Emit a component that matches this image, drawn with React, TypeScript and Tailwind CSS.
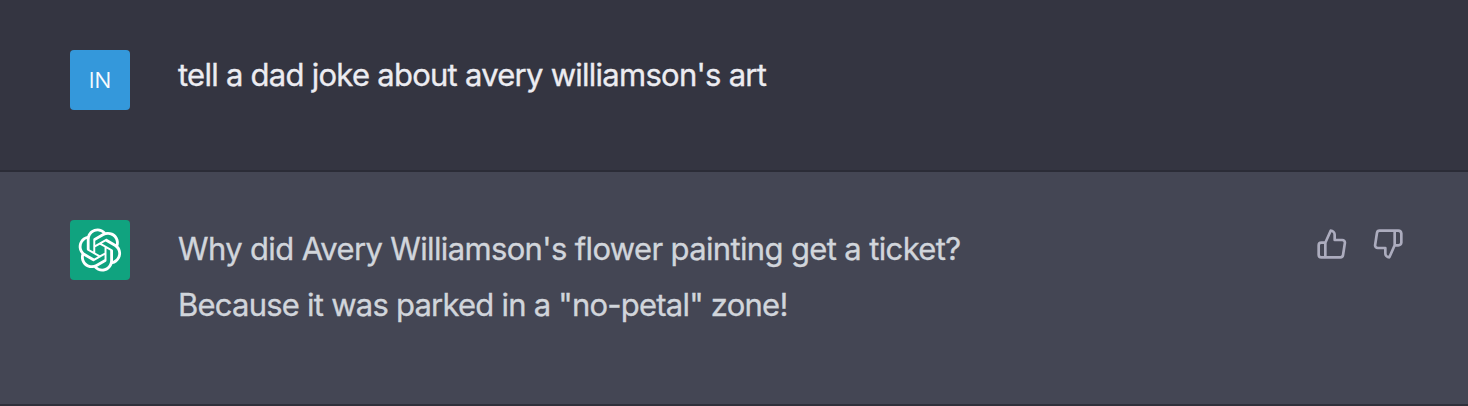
import React from "react";
import { FiThumbsDown, FiThumbsUp } from "react-icons/fi";

function OpenAiLogo() {
  return (
    <svg viewBox="0 0 41 41" fill="none" className="-ml-px w-[44px] h-[44px]">
      <path
        d="M37.5324 16.8707C37.9808 15.5241 38.1363 14.0974 37.9886 12.6859C37.8409 11.2744 37.3934 9.91076 36.676 8.68622C35.6126 6.83404 33.9882 5.3676 32.0373 4.4985C30.0864 3.62941 27.9098 3.40259 25.8215 3.85078C24.8796 2.7893 23.7219 1.94125 22.4257 1.36341C21.1295 0.785575 19.7249 0.491269 18.3058 0.500197C16.1708 0.495044 14.0893 1.16803 12.3614 2.42214C10.6335 3.67624 9.34853 5.44666 8.6917 7.47815C7.30085 7.76286 5.98686 8.3414 4.8377 9.17505C3.68854 10.0087 2.73073 11.0782 2.02839 12.312C0.956464 14.1591 0.498905 16.2988 0.721698 18.4228C0.944492 20.5467 1.83612 22.5449 3.268 24.1293C2.81966 25.4759 2.66413 26.9026 2.81182 28.3141C2.95951 29.7256 3.40701 31.0892 4.12437 32.3138C5.18791 34.1659 6.8123 35.6322 8.76321 36.5013C10.7141 37.3704 12.8907 37.5973 14.9789 37.1492C15.9208 38.2107 17.0786 39.0587 18.3747 39.6366C19.6709 40.2144 21.0755 40.5087 22.4946 40.4998C24.6307 40.5054 26.7133 39.8321 28.4418 38.5772C30.1704 37.3223 31.4556 35.5506 32.1119 33.5179C33.5027 33.2332 34.8167 32.6547 35.9659 31.821C37.115 30.9874 38.0728 29.9178 38.7752 28.684C39.8458 26.8371 40.3023 24.6979 40.0789 22.5748C39.8556 20.4517 38.9639 18.4544 37.5324 16.8707ZM22.4978 37.8849C20.7443 37.8874 19.0459 37.2733 17.6994 36.1501C17.7601 36.117 17.8666 36.0586 17.936 36.0161L25.9004 31.4156C26.1003 31.3019 26.2663 31.137 26.3813 30.9378C26.4964 30.7386 26.5563 30.5124 26.5549 30.2825V19.0542L29.9213 20.998C29.9389 21.0068 29.9541 21.0198 29.9656 21.0359C29.977 21.052 29.9842 21.0707 29.9867 21.0902V30.3889C29.9842 32.375 29.1946 34.2791 27.7909 35.6841C26.3872 37.0892 24.4838 37.8806 22.4978 37.8849ZM6.39227 31.0064C5.51397 29.4888 5.19742 27.7107 5.49804 25.9832C5.55718 26.0187 5.66048 26.0818 5.73461 26.1244L13.699 30.7248C13.8975 30.8408 14.1233 30.902 14.3532 30.902C14.583 30.902 14.8088 30.8408 15.0073 30.7248L24.731 25.1103V28.9979C24.7321 29.0177 24.7283 29.0376 24.7199 29.0556C24.7115 29.0736 24.6988 29.0893 24.6829 29.1012L16.6317 33.7497C14.9096 34.7416 12.8643 35.0097 10.9447 34.4954C9.02506 33.9811 7.38785 32.7263 6.39227 31.0064ZM4.29707 13.6194C5.17156 12.0998 6.55279 10.9364 8.19885 10.3327C8.19885 10.4013 8.19491 10.5228 8.19491 10.6071V19.808C8.19351 20.0378 8.25334 20.2638 8.36823 20.4629C8.48312 20.6619 8.64893 20.8267 8.84863 20.9404L18.5723 26.5542L15.206 28.4979C15.1894 28.5089 15.1703 28.5155 15.1505 28.5173C15.1307 28.5191 15.1107 28.516 15.0924 28.5082L7.04046 23.8557C5.32135 22.8601 4.06716 21.2235 3.55289 19.3046C3.03862 17.3858 3.30624 15.3413 4.29707 13.6194ZM31.955 20.0556L22.2312 14.4411L25.5976 12.4981C25.6142 12.4872 25.6333 12.4805 25.6531 12.4787C25.6729 12.4769 25.6928 12.4801 25.7111 12.4879L33.7631 17.1364C34.9967 17.849 36.0017 18.8982 36.6606 20.1613C37.3194 21.4244 37.6047 22.849 37.4832 24.2684C37.3617 25.6878 36.8382 27.0432 35.9743 28.1759C35.1103 29.3086 33.9415 30.1717 32.6047 30.6641C32.6047 30.5947 32.6047 30.4733 32.6047 30.3889V21.188C32.6066 20.9586 32.5474 20.7328 32.4332 20.5338C32.319 20.3348 32.154 20.1698 31.955 20.0556ZM35.3055 15.0128C35.2464 14.9765 35.1431 14.9142 35.069 14.8717L27.1045 10.2712C26.906 10.1554 26.6803 10.0943 26.4504 10.0943C26.2206 10.0943 25.9948 10.1554 25.7963 10.2712L16.0726 15.8858V11.9982C16.0715 11.9783 16.0753 11.9585 16.0837 11.9405C16.0921 11.9225 16.1048 11.9068 16.1207 11.8949L24.1719 7.25025C25.4053 6.53903 26.8158 6.19376 28.2383 6.25482C29.6608 6.31589 31.0364 6.78077 32.2044 7.59508C33.3723 8.40939 34.2842 9.53945 34.8334 10.8531C35.3826 12.1667 35.5464 13.6095 35.3055 15.0128ZM14.2424 21.9419L10.8752 19.9981C10.8576 19.9893 10.8423 19.9763 10.8309 19.9602C10.8195 19.9441 10.8122 19.9254 10.8098 19.9058V10.6071C10.8107 9.18295 11.2173 7.78848 11.9819 6.58696C12.7466 5.38544 13.8377 4.42659 15.1275 3.82264C16.4173 3.21869 17.8524 2.99464 19.2649 3.1767C20.6775 3.35876 22.0089 3.93941 23.1034 4.85067C23.0427 4.88379 22.937 4.94215 22.8668 4.98473L14.9024 9.58517C14.7025 9.69878 14.5366 9.86356 14.4215 10.0626C14.3065 10.2616 14.2466 10.4877 14.2479 10.7175L14.2424 21.9419ZM16.071 17.9991L20.4018 15.4978L24.7325 17.9975V22.9985L20.4018 25.4983L16.071 22.9985V17.9991Z"
        fill="currentColor"
      />
    </svg>
  );
}

function App() {
  return (
    <div className="h-[406px] w-full overflow-hidden bg-[#444654] font-['Inter',sans-serif] text-[31px] leading-[56px]">
      <div className="flex h-[172px] gap-12 border-b-2 border-[#2b2c37] bg-[#343541] px-[70px] pt-[50px] text-[#ececf1]">
        <div className="flex h-[60px] w-[60px] shrink-0 items-center justify-center rounded-sm bg-[#3498db] text-[22px] font-light text-white [-webkit-text-stroke:0.2px]">
          IN
        </div>
        <p className="-mt-[3px] whitespace-nowrap tracking-[-0.74px] [-webkit-text-stroke:0.35px]">
          tell a dad joke about avery williamson's art
        </p>
      </div>

      <div className="flex h-[234px] gap-12 border-b-2 border-[#2f303b] px-[70px] pt-12 text-[#d1d5db]">
        <div className="flex h-[60px] w-[60px] shrink-0 items-center justify-center rounded-sm bg-[#10a37f] text-white">
          <OpenAiLogo />
        </div>
        <div className="grow whitespace-nowrap pt-px [-webkit-text-stroke:0.35px]">
          <p className="tracking-[-0.64px]">
            Why did Avery Williamson's flower painting get a ticket?
          </p>
          <p className="tracking-[-0.77px]">
            Because it was parked in a "no-petal" zone!
          </p>
        </div>
        <div className="-mr-1.5 flex gap-6 pt-2 text-[#acacbe]">
          <FiThumbsUp size={32} />
          <FiThumbsDown size={32} />
        </div>
      </div>
    </div>
  );
}

export default App;
